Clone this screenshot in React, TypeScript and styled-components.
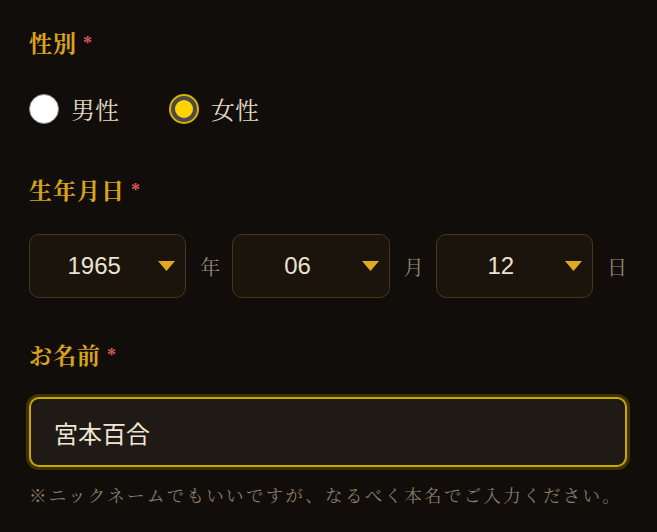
import { useState } from 'react';
import styled, { createGlobalStyle } from 'styled-components';

const GlobalStyle = createGlobalStyle`
  html, body {
    margin: 0;
    padding: 0;
    background: #110d0a;
  }
  body {
    font-family: 'Liberation Serif', 'Noto Serif CJK JP', serif;
  }
`;

const Page = styled.div`
  width: 657px;
  height: 532px;
  box-sizing: border-box;
  padding: 29px 30px 0 29px;
  background: #110d0a;
  display: flex;
  flex-direction: column;
  gap: 43px;
`;

const Field = styled.div<{ $gap?: number }>`
  display: flex;
  flex-direction: column;
  gap: ${(p) => p.$gap ?? 28}px;
`;

const Label = styled.div`
  display: flex;
  align-items: center;
  height: 30px;
  box-sizing: border-box;
  padding-bottom: 4px;
  font-size: 23px;
  font-weight: bold;
  color: #d9a21b;
  letter-spacing: 1px;
`;

const Required = styled.span`
  margin-left: 6px;
  font-size: 18px;
  color: #d55656;
  position: relative;
  top: 1px;
`;

const RadioRow = styled.div`
  display: flex;
  align-items: center;
  height: 46px;
  box-sizing: border-box;
  padding-bottom: 3px;
  gap: 50px;
`;

const RadioOption = styled.label`
  display: flex;
  align-items: center;
  gap: 12px;
  cursor: pointer;
  font-size: 24px;
  color: #e3d8c4;
`;

const RadioCircle = styled.span<{ $checked: boolean }>`
  width: 30px;
  height: 30px;
  box-sizing: border-box;
  border-radius: 50%;
  display: flex;
  align-items: center;
  justify-content: center;
  border: ${(p) => (p.$checked ? '2px solid #d8b400' : '1px solid #8a8a8a')};
  background: ${(p) => (p.$checked ? '#4a4a4a' : '#ffffff')};
  & > span {
    width: 18px;
    height: 18px;
    border-radius: 50%;
    background: #ffd400;
    display: ${(p) => (p.$checked ? 'block' : 'none')};
  }
`;

const DateRow = styled.div`
  display: grid;
  grid-template-columns: 1fr 18px 1fr 18px 1fr 18px;
  column-gap: 14px;
  align-items: center;
  width: 596px;
`;

const Select = styled.div`
  height: 64px;
  box-sizing: border-box;
  border: 1px solid #46371a;
  border-radius: 10px;
  background: #1a140c;
  display: flex;
  align-items: center;
  padding: 0 10px 0 0;
  cursor: pointer;
`;

const SelectValue = styled.span`
  flex: 1;
  text-align: center;
  font-family: 'Liberation Sans', Arial, sans-serif;
  font-size: 24px;
  color: #ece2cf;
`;

const Unit = styled.span`
  font-size: 20px;
  color: #958a78;
`;

const Input = styled.input`
  height: 70px;
  width: 100%;
  box-sizing: border-box;
  border: 2px solid #c9a900;
  border-radius: 10px;
  background: #1f1a16;
  box-shadow: 0 0 0 3px rgba(150, 120, 0, 0.35);
  padding: 0 23px;
  font-family: 'Noto Sans CJK JP', sans-serif;
  font-size: 24px;
  color: #f0e6d2;
  outline: none;
`;

const Hint = styled.p`
  margin: 15px 0 0;
  font-size: 17.5px;
  letter-spacing: 2.3px;
  color: #8a7c69;
  white-space: nowrap;
`;

const Arrow = () => (
  <svg width="17" height="10" viewBox="0 0 17 10">
    <path d="M0 0 H17 L8.5 10 Z" fill="#e2a91e" />
  </svg>
);

const dateParts = [
  { value: '1965', unit: '年' },
  { value: '06', unit: '月' },
  { value: '12', unit: '日' },
];

export default function App() {
  const [gender, setGender] = useState('female');
  const [name, setName] = useState('宮本百合');

  return (
    <>
      <GlobalStyle />
      <Page>
        <Field>
          <Label>
            性別<Required>*</Required>
          </Label>
          <RadioRow>
            <RadioOption onClick={() => setGender('male')}>
              <RadioCircle $checked={gender === 'male'}>
                <span />
              </RadioCircle>
              男性
            </RadioOption>
            <RadioOption onClick={() => setGender('female')}>
              <RadioCircle $checked={gender === 'female'}>
                <span />
              </RadioCircle>
              女性
            </RadioOption>
          </RadioRow>
        </Field>

        <Field>
          <Label>
            生年月日<Required>*</Required>
          </Label>
          <DateRow>
            {dateParts.map((d) => (
              <>
                <Select key={d.unit}>
                  <SelectValue>{d.value}</SelectValue>
                  <Arrow />
                </Select>
                <Unit>{d.unit}</Unit>
              </>
            ))}
          </DateRow>
        </Field>

        <Field $gap={26}>
          <Label>
            お名前<Required>*</Required>
          </Label>
          <div>
            <Input value={name} onChange={(e) => setName(e.target.value)} />
            <Hint>※ニックネームでもいいですが、なるべく本名でご入力ください。</Hint>
          </div>
        </Field>
      </Page>
    </>
  );
}
